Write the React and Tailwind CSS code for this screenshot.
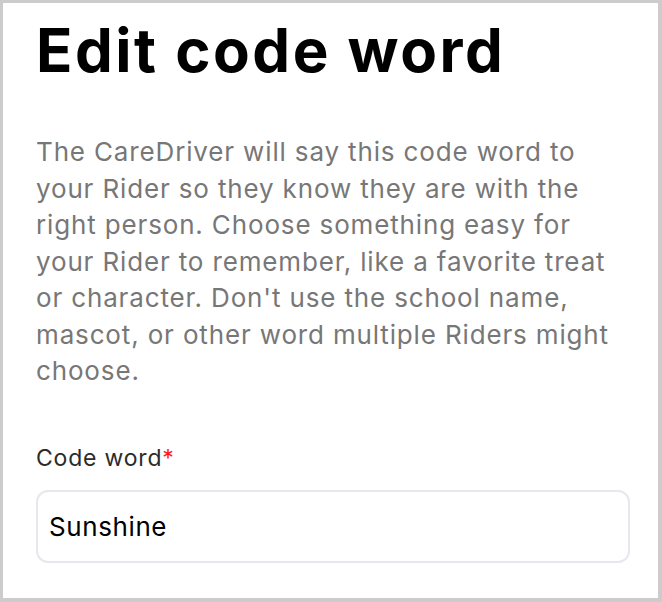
export default function App() {
  return (
    <main className="w-full h-screen bg-[#cccccc] pt-[3px] pl-[3px] pr-[4px] pb-[4px]">
      <section className="h-full bg-white pl-[33px] pr-[28px] pt-[17px] font-['Inter',sans-serif]">
        <h1 className="text-[60px] leading-none font-bold text-black tracking-[2.5px]">
          Edit code word
        </h1>
        <p className="mt-[54px] text-[26px] leading-[36.5px] tracking-[0.85px] text-[#777777]">
          The CareDriver will say this code word to your Rider so they know
          they are with the right person. Choose something easy for your Rider
          to remember, like a favorite treat or character. Don't use the school
          name, mascot, or other word multiple Riders might choose.
        </p>
        <div className="mt-[54px] flex flex-col gap-[18px]">
          <label className="text-[23px] leading-[28px] tracking-[0.8px] text-[#2b2b2b]">
            Code word<span className="text-[#ff1a1a]">*</span>
          </label>
          <input
            defaultValue="Sunshine"
            className="w-full h-[73px] px-[11px] rounded-[12px] border-2 border-[#e6e8ee] text-[26px] tracking-[0.6px] text-black outline-none"
          />
        </div>
      </section>
    </main>
  );
}
